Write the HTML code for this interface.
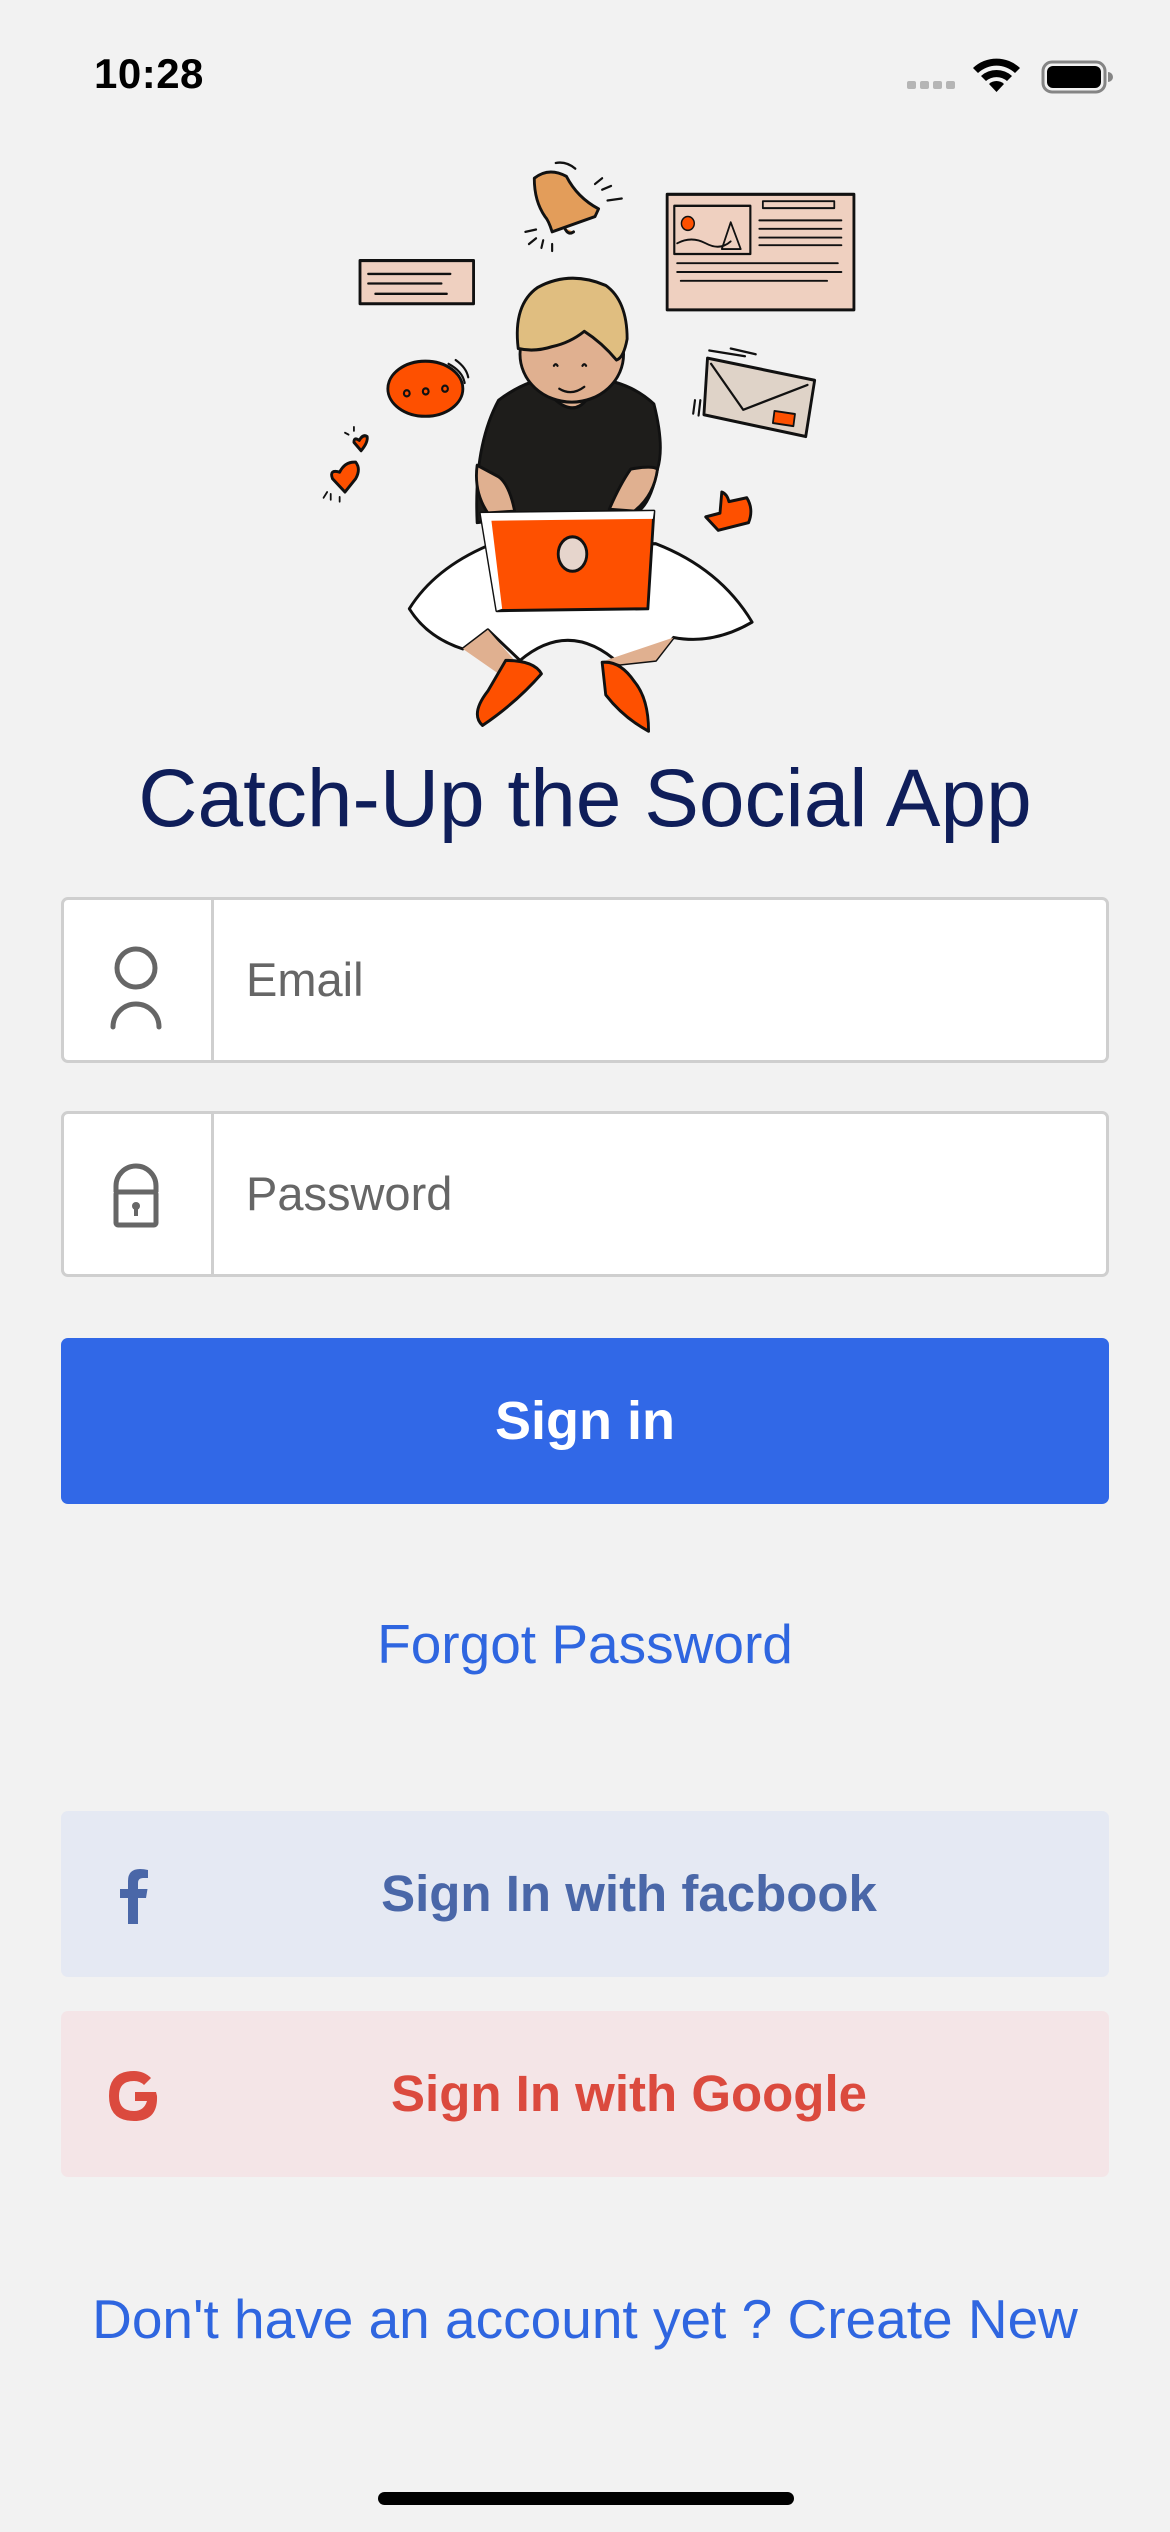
<!DOCTYPE html>
<html><head><meta charset="utf-8"><style>
*{margin:0;padding:0;box-sizing:border-box}
body{width:1170px;height:2532px;background:#f2f2f2;font-family:"Liberation Sans",sans-serif;position:relative;overflow:hidden}
.abs{position:absolute}
.time{left:94px;top:50px;font-size:42px;font-weight:bold;color:#000;letter-spacing:0.5px}
.title{left:0;width:1170px;top:752px;text-align:center;font-size:82px;color:#0f1e5a}
.field{left:61px;width:1048px;height:166px;background:#fff;border:3px solid #cfcfcf;border-radius:7px}
.field .div{position:absolute;left:147px;top:0;bottom:0;width:3px;background:#cfcfcf}
.field .ph{position:absolute;left:182px;top:0;height:160px;line-height:160px;font-size:47px;color:#666}
.btn{left:61px;width:1048px;height:166px;border-radius:7px;text-align:center;line-height:166px;font-weight:bold}
.link{left:0;width:1170px;text-align:center;font-size:55px;color:#2f66e0}
</style></head><body>
<div class="abs time">10:28</div>
<svg class="abs" style="left:900px;top:52px" width="220" height="44" viewBox="0 0 220 44">
<g fill="#b5b5b5"><rect x="7" y="29" width="9" height="8" rx="2"/><rect x="20" y="29" width="9" height="8" rx="2"/><rect x="33" y="29" width="9" height="8" rx="2"/><rect x="46" y="29" width="9" height="8" rx="2"/></g>
<g fill="#000"><path d="M73 16 A34 34 0 0 1 120 16 L115 21 A27 27 0 0 0 78 21Z"/><path d="M81 24 A23 23 0 0 1 112 24 L107 29 A16 16 0 0 0 86 29Z"/><path d="M89 32 A11 11 0 0 1 104 32 L96.5 40Z"/></g>
<rect x="143" y="10" width="62" height="30" rx="9" fill="none" stroke="#000" stroke-width="3" opacity="0.45"/>
<rect x="147" y="14" width="54" height="22" rx="6" fill="#000"/>
<path d="M208 20 a4 4 0 0 1 0 10z" fill="#000" opacity="0.45"/>
</svg>

<svg class="abs" style="left:320px;top:140px" width="560" height="600" viewBox="0 0 1568 1568" preserveAspectRatio="none">
<g stroke="#111" stroke-width="8" stroke-linecap="round" stroke-linejoin="round">
<rect x="112" y="315" width="318" height="113" fill="#efd0c0"/>
<path d="M135 350 H365 M135 375 H340 M155 402 H355" fill="none" stroke-width="6"/>
<rect x="972" y="142" width="523" height="302" fill="#efd0c0"/>
<rect x="992" y="172" width="213" height="126" fill="#efd0c0" stroke-width="6"/>
<circle cx="1030" cy="218" r="18" fill="#fe5000" stroke-width="4"/>
<path d="M1000 270 Q1040 250 1080 270 T1150 265 M1125 285 L1150 215 L1178 285Z" fill="none" stroke-width="5"/>
<rect x="1240" y="160" width="200" height="18" fill="none" stroke-width="5"/>
<path d="M1230 210 H1460 M1230 232 H1460 M1230 255 H1460 M1230 275 H1460 M1000 322 H1450 M1000 345 H1460 M1010 368 H1420" fill="none" stroke-width="5"/>
<path d="M600 100 Q640 70 690 95 Q720 150 780 180 L770 200 L650 240 Q640 210 630 200 Q600 160 600 100Z" fill="#e39d5a"/>
<path d="M685 230 q10 20 25 10" fill="#e39d5a"/>
<path d="M770 115 l20 -15 M790 130 l25 -10 M805 158 l40 -5 M575 240 l30 -6 M585 272 l20 -15 M620 282 l5 -20 M650 290 v-18 M660 60 q30 -5 55 15" fill="none" stroke-width="6"/>
<ellipse cx="295" cy="650" rx="105" ry="72" fill="#fe5000"/>
<g fill="none" stroke-width="6"><circle cx="243" cy="662" r="8"/><circle cx="296" cy="657" r="8"/><circle cx="350" cy="650" r="8"/><path d="M360 585 q40 20 45 50 M380 575 q30 20 35 45"/></g>
<path d="M70 920 L35 885 Q25 860 55 868 Q70 840 100 842 Q115 860 100 885Z" fill="#fe5000"/>
<path d="M115 812 L95 790 Q95 775 110 785 Q120 768 132 775 Q135 790 115 812Z" fill="#fe5000"/>
<path d="M10 935 l10 -15 M30 940 v-15 M55 945 v-12 M70 765 l10 5 M95 750 v10" fill="none" stroke-width="5"/>
<path d="M1085 570 L1385 628 L1360 775 L1075 718Z" fill="#dfd3c8"/>
<path d="M1095 585 L1185 705 L1365 640" fill="none" stroke-width="6"/>
<rect x="1270" y="712" width="58" height="32" fill="#fe5000" stroke-width="5" transform="rotate(8 1300 728)"/>
<path d="M1090 550 l100 15 M1150 545 l70 15 M1045 715 l5 -35 M1060 720 l5 -40" fill="none" stroke-width="6"/>
<path d="M1080 985 L1120 975 L1125 920 Q1140 925 1145 945 L1195 935 Q1215 965 1200 1000 L1115 1020Z" fill="#fe5000"/>
<path d="M250 1225 Q320 1120 470 1060 L940 1055 Q1120 1120 1210 1260 Q1100 1320 990 1300 L940 1360 L840 1370 Q700 1250 560 1360 L470 1280 L400 1330 Q300 1300 250 1225Z" fill="#fff"/>
<path d="M400 1330 L500 1395 L545 1360 L470 1280Z M940 1360 L840 1370 L800 1360 L990 1300Z" fill="#e0b090" stroke="none"/>
<path d="M520 1360 Q600 1360 620 1395 Q550 1470 455 1530 Q420 1500 470 1440Z" fill="#fe5000"/>
<path d="M790 1365 Q840 1360 880 1415 Q920 1460 920 1545 Q850 1510 800 1450Z" fill="#fe5000"/>
<path d="M440 1000 Q430 800 500 680 Q600 610 700 620 Q850 615 935 690 Q965 800 945 860 Q920 980 860 980 L520 985 Q450 1000 440 1000Z" fill="#1e1d1b"/>
<path d="M440 850 Q430 920 470 975 L545 970 Q530 900 500 880Z M870 860 Q930 850 945 860 Q935 930 880 970 L810 965 Q840 900 870 860Z" fill="#e0b090"/>
<path d="M660 680 Q710 720 745 680 L740 650 L670 650Z" fill="#e0b090"/>
<ellipse cx="705" cy="560" rx="145" ry="125" fill="#e0b090"/>
<path d="M555 545 Q540 430 610 385 Q700 340 800 380 Q860 420 860 520 Q850 570 830 575 Q790 530 740 500 Q700 530 650 540 Q600 555 555 545Z" fill="#e0be80"/>
<path d="M655 590 q5 -8 10 0 M735 590 q5 -8 10 0 M670 650 Q705 670 740 645" fill="none" stroke-width="6"/>
<path d="M450 975 L935 970 L918 1225 L495 1230Z" fill="#fe5000"/>
<path d="M450 975 L935 970 L932 990 L480 995 L510 1225 L495 1230Z" fill="#fff" stroke="none"/>
<ellipse cx="707" cy="1082" rx="40" ry="45" fill="#e6d5cc"/>
</g>
</svg>

<div class="abs title">Catch-Up the Social App</div>

<div class="abs field" style="top:897px"><div class="div"></div><div class="ph">Email</div>
<svg style="position:absolute;left:28px;top:0" width="90" height="160" viewBox="0 0 90 160"><g fill="none" stroke="#666" stroke-width="5" stroke-linecap="round"><circle cx="44" cy="68" r="19"/><path d="M21 127 A23 23 0 0 1 67 127"/></g></svg></div>

<div class="abs field" style="top:1111px"><div class="div"></div><div class="ph">Password</div>
<svg style="position:absolute;left:28px;top:0" width="90" height="160" viewBox="0 0 90 160"><g fill="none" stroke="#666" stroke-width="5" stroke-linejoin="round"><path d="M24 78 V72 A20 20 0 0 1 64 72 V78"/><rect x="24" y="78" width="40" height="33" rx="2"/></g><circle cx="44" cy="92" r="4" fill="#666"/><rect x="42" y="92" width="4" height="10" fill="#666"/></svg></div>

<div class="abs btn" style="top:1338px;background:#3168e7;color:#fff;font-size:54px">Sign in</div>
<div class="abs link" style="top:1612px">Forgot Password</div>

<div class="abs btn" style="top:1811px;background:#e5e9f3;color:#4a67a8;font-size:51px;padding-left:88px">Sign In with facbook</div>
<svg class="abs" style="left:118px;top:1866px" width="32" height="58" viewBox="0 0 32 58"><path d="M20 58 V32 H28 L29.5 23 H20 V17 Q20 12 25 12 H30 V4 Q26 3 22 3 Q10 3 10 15 V23 H2 V32 H10 V58Z" fill="#4a67a8"/></svg>

<div class="abs btn" style="top:2011px;background:#f4e5e7;color:#db4a3e;font-size:51px;padding-left:88px">Sign In with Google</div>
<svg class="abs" style="left:106px;top:2068px" width="56" height="56" viewBox="0 0 56 56"><path d="M50 24 H29 V33 H41 Q38 43 28 43 Q13 43 13 28 Q13 13 28 13 Q34 13 38 17 L45 10 Q38 3 28 3 Q3 3 3 28 Q3 53 28 53 Q52 53 51 28Z" fill="#db4a3e"/></svg>

<div class="abs link" style="top:2287px">Don't have an account yet ? Create New</div>
<div class="abs" style="left:378px;top:2492px;width:416px;height:13px;border-radius:7px;background:#000"></div>
</body></html>
